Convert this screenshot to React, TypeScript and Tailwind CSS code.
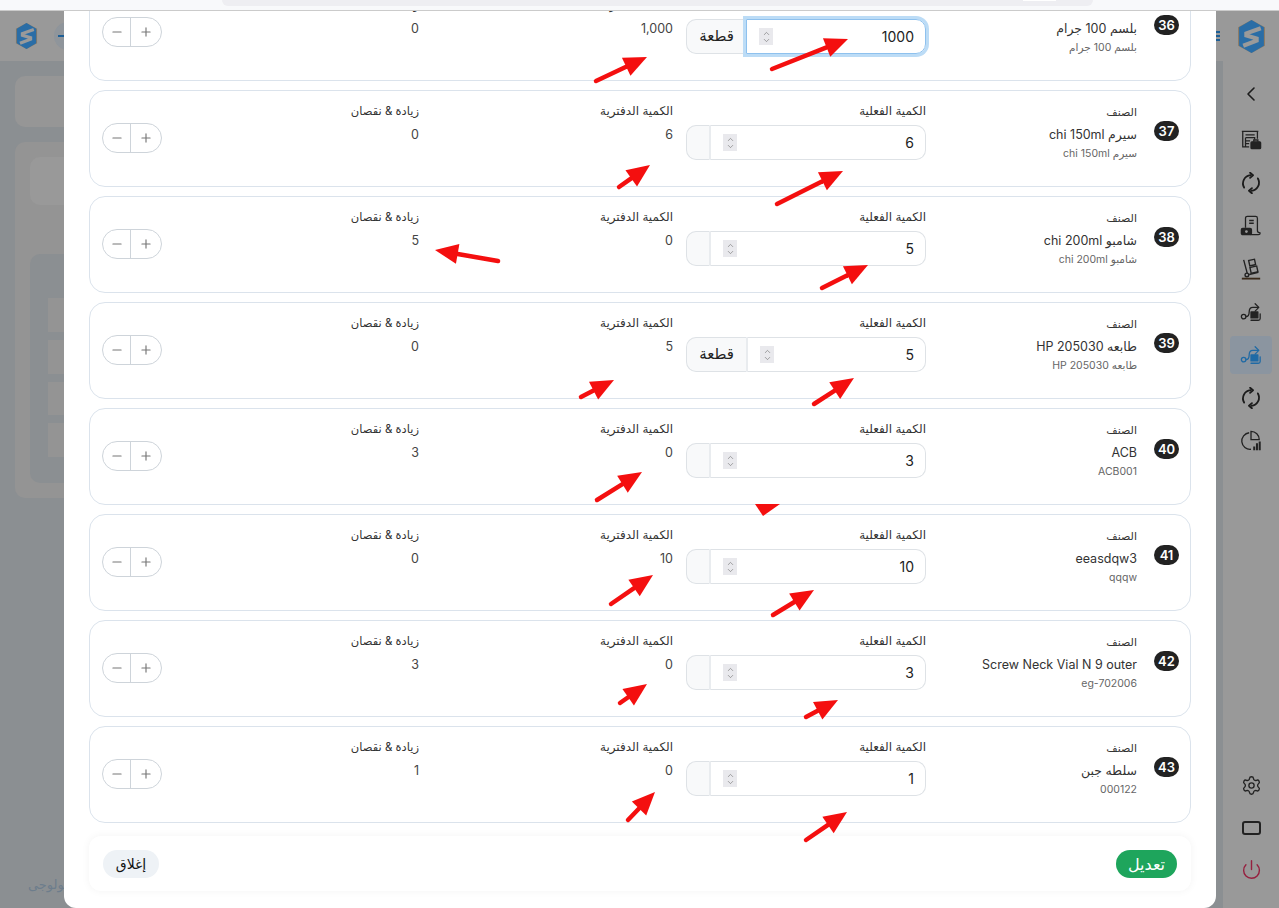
import React from "react";
import { ChevronLeft, Minus, Plus, Settings, Power, ChevronUp, ChevronDown } from "lucide-react";

type Item = {
  no: number;
  name: string;
  code: string;
  actual: string;
  book: string;
  diff: string;
  unit?: string;
  focused?: boolean;
};

const items: Item[] = [
  { no: 36, name: "بلسم 100 جرام", code: "بلسم 100 جرام", actual: "1000", book: "1,000", diff: "0", unit: "قطعة", focused: true },
  { no: 37, name: "سيرم chi 150ml", code: "سيرم chi 150ml", actual: "6", book: "6", diff: "0" },
  { no: 38, name: "شامبو chi 200ml", code: "شامبو chi 200ml", actual: "5", book: "0", diff: "5" },
  { no: 39, name: "طابعه HP 205030", code: "طابعه HP 205030", actual: "5", book: "5", diff: "0", unit: "قطعة" },
  { no: 40, name: "ACB", code: "ACB001", actual: "3", book: "0", diff: "3" },
  { no: 41, name: "eeasdqw3", code: "qqqw", actual: "10", book: "10", diff: "0" },
  { no: 42, name: "Screw Neck Vial N 9 outer", code: "eg-702006", actual: "3", book: "0", diff: "3" },
  { no: 43, name: "سلطه جبن", code: "000122", actual: "1", book: "0", diff: "1" },
];

// tail x, tail y, tip x, tip y
const arrows = [
  [596, 81, 647, 57],
  [772, 69, 848, 39],
  [619, 187, 650, 165],
  [777, 204, 843, 171],
  [498, 261, 435, 250],
  [822, 288, 868, 265],
  [581, 397, 614, 380],
  [814, 404, 854, 378],
  [597, 500, 642, 472],
  [611, 604, 653, 575],
  [773, 615, 814, 590],
  [620, 703, 647, 684],
  [806, 717, 838, 700],
  [628, 820, 655, 792],
  [806, 840, 847, 812],
];

const Arrow = ({ a }: { a: number[] }) => {
  const [x1, y1, x2, y2] = a;
  const len = Math.hypot(x2 - x1, y2 - y1);
  const ux = (x2 - x1) / len;
  const uy = (y2 - y1) / len;
  const bx = x2 - ux * 23;
  const by = y2 - uy * 23;
  const pts = `${x2},${y2} ${bx - uy * 10},${by + ux * 10} ${bx + uy * 10},${by - ux * 10}`;
  return (
    <g>
      <line x1={x1} y1={y1} x2={bx} y2={by} stroke="#f40f0f" strokeWidth="4.500" strokeLinecap="round" />
      <polygon points={pts} fill="#f40f0f" />
    </g>
  );
};

const Logo = ({ className }: { className: string }) => (
  <svg viewBox="0 0 28 32" className={className}>
    <polygon points="14,0 27,7 27,25 14,32 1,25 1,7" fill="#8d7a62" />
    <polygon points="14,0 26,7 26,25 14,32 2,25 2,7" fill="#2a6da6" />
    <path d="M23 8 L9 13 L9 15 L19 18 L19 20 L6 25" fill="none" stroke="#9a9a9a" strokeWidth="4" />
  </svg>
);

const Sync = () => (
  <svg viewBox="0 0 24 24" className="w-[22px] h-[22px]" fill="none" stroke="#1c1c1c" strokeWidth="2" strokeLinecap="round" strokeLinejoin="round">
    <path d="M4.500 17a9 9 0 0 1 7-13.500" />
    <path d="M11 0.800 14.200 3.600 11 6.400" />
    <path d="M19.500 7a9 9 0 0 1-7 13.500" />
    <path d="M13 17.600 9.800 20.400 13 23.200" />
  </svg>
);

const Store = () => (
  <svg viewBox="0 0 24 24" className="w-[22px] h-[22px]" fill="none" stroke="#222" strokeWidth="1.4">
    <path d="M2 2.500h18M3 2.500v17h7M19 2.500v8M6 6.500h10M6 9.500h10v2M6 9.500v10M6 13h5M6 16h4" />
    <rect x="12" y="14" width="10.500" height="7.500" rx="1" fill="#222" />
    <path d="M15 14v-2h4.500v2" />
  </svg>
);

const Invoice = () => (
  <svg viewBox="0 0 24 24" className="w-[22px] h-[22px]" fill="none" stroke="#222" strokeWidth="1.4" strokeLinejoin="round">
    <path d="M6 14V3.500C6 2 7 1.500 8 1.500h9c1 0 2 .8 2 2V17c0 1.500 1 2.500 3 2.500 0 1.500-1 2-2 2H11" />
    <path d="M10 6h5M10 9h5" />
    <rect x="1.500" y="14.500" width="11" height="7" rx="1.500" fill="#222" />
    <circle cx="7" cy="18" r="1.500" fill="#999" stroke="none" />
  </svg>
);

const Trolley = () => (
  <svg viewBox="0 0 24 24" className="w-[22px] h-[22px]" fill="none" stroke="#222" strokeWidth="1.5">
    <path d="M4 2l4 15" />
    <rect x="10" y="2" width="6.500" height="6" transform="rotate(-12 13 5)" />
    <rect x="11.500" y="9.500" width="7.500" height="6.500" transform="rotate(-12 15 13)" />
    <path d="M10 18l10-2.500" />
    <circle cx="7.500" cy="18.500" r="2" />
    <path d="M2 22.500h20" strokeWidth="2" stroke="#3a2a1a" />
  </svg>
);

const RouteBox = ({ color }: { color: string }) => (
  <svg viewBox="0 0 24 24" className="w-[22px] h-[22px]" fill="none" stroke={color} strokeWidth="1.4" strokeLinecap="round" strokeLinejoin="round">
    <circle cx="4" cy="17" r="2.500" />
    <path d="M6.500 17c3 0 3.500-2 3.500-5 0-3 1-5 4-5h6" />
    <path d="M16.500 3l4 4-4 4" />
    <rect x="12" y="12" width="7.500" height="6.500" fill={color} />
    <path d="M22 14v5c0 1-.5 2-2 2h-8" />
  </svg>
);

const PieBars = () => (
  <svg viewBox="0 0 24 24" className="w-[22px] h-[22px]" fill="none" stroke="#222" strokeWidth="1.4">
    <path d="M10 3a9 9 0 1 0 2 18" />
    <path d="M12 1.500a9 9 0 0 1 9 9h-9z" />
    <path d="M15.500 22v-4M18.500 22v-7.500M21.500 22v-9.500" strokeWidth="2.200" />
  </svg>
);

const SideIcon = ({ children, active }: { children: React.ReactNode; active?: boolean }) => (
  <div className={`w-[42px] h-[38px] rounded flex items-center justify-center shrink-0 ${active ? "bg-[#8b95a0]" : ""}`}>
    {children}
  </div>
);

const Field = ({ label, value, labelClass }: { label: string; value: string; labelClass: string }) => (
  <div className="flex flex-col">
    <span className={`leading-4 text-[#333] ${labelClass}`}>{label}</span>
    <span className="text-[12.500px] leading-5 mt-[6px] text-[#444]">{value}</span>
  </div>
);

const QtyInput = ({ item }: { item: Item }) => (
  <div dir="ltr" className="w-[240px] h-[35px] flex">
    <div
      dir="rtl"
      className={`shrink-0 bg-[#f8f9fa] rounded-l-[10px] border border-r-0 border-[#dee2e6] flex items-center justify-center text-[15px] text-[#222] ${
        item.unit ? "w-[60px]" : "w-[23px]"
      }`}
    >
      {item.unit}
    </div>
    <div
      className={`flex-1 min-w-0 flex items-center pl-[12px] pr-[11px] rounded-r-[10px] border ${
        item.focused ? "border-[#8ec1ee] ring-[3px] ring-[#bcdcf6]" : "border-[#dee2e6] border-l-2 border-l-[#e9ecef]"
      }`}
    >
      <div className="shrink-0 w-[14px] h-[17px] bg-[#e9e9ed] flex flex-col items-center justify-center text-[#666]">
        <ChevronUp size={9} strokeWidth={1.500} className="-mb-[1px]" />
        <ChevronDown size={9} strokeWidth={1.500} className="-mt-[1px]" />
      </div>
      <input
        readOnly
        value={item.actual}
        className="flex-1 min-w-0 text-right text-[14px] text-[#222] outline-none bg-transparent"
      />
    </div>
  </div>
);

const Card = ({ item }: { item: Item }) => (
  <div dir="rtl" className="h-[97px] shrink-0 flex border border-[#dbe3ec] rounded-[16px] pr-[11px] pl-3 pt-3 pb-[13px]">
    <div className="w-[25px] shrink-0 ml-[17px]">
      <div className="mt-[18px] h-5 rounded-full bg-[#222] text-white font-semibold text-[13px] leading-5 text-center" dir="ltr">
        {item.no}
      </div>
    </div>
    <div className="w-[211px] shrink-0 flex flex-col pt-[1px]">
      <span className="text-[11px] leading-4 text-[#333]">الصنف</span>
      <span className="text-[12.500px] leading-5 mt-[5px] text-[#333]">{item.name}</span>
      <span className="text-[10.500px] leading-4 mt-[1px] text-[#666]">{item.code}</span>
    </div>
    <div className="w-[253px] shrink-0">
      <div className="text-[12px] leading-4 text-[#333] mb-[6px]">الكمية الفعلية</div>
      <QtyInput item={item} />
    </div>
    <div className="w-[254px] shrink-0">
      <Field label="الكمية الدفترية" value={item.book} labelClass="text-[12px]" />
    </div>
    <div className="flex-1">
      <Field label="زيادة & نقصان" value={item.diff} labelClass="text-[11.500px]" />
    </div>
    <div dir="ltr" className="self-center w-[60px] h-[30px] shrink-0 flex rounded-full border border-[#ced4da] text-[#777]">
      <div className="w-[28px] flex items-center justify-center border-r border-[#ced4da]">
        <Minus size={14} />
      </div>
      <div className="flex-1 flex items-center justify-center">
        <Plus size={14} />
      </div>
    </div>
  </div>
);

const App = () => {
  return (
    <div className="relative h-screen w-full overflow-hidden flex flex-col bg-[#8b8f92] font-['Inter','Noto_Sans','DejaVu_Sans',sans-serif]">
      {/* browser strip on top */}
      <div className="h-[11px] shrink-0 bg-[#f8f9fb] border-b border-[#cbcbcb]">
        <div className="ml-[222px] w-[871px] h-[6px] bg-[#eeeef2] rounded-b-md flex justify-end pr-[37px]">
          <div className="w-[33px] h-[1px] bg-white" />
        </div>
      </div>

      <div className="flex-1 min-h-0 flex">
        {/* page behind the modal, left */}
        <div className="w-[64px] shrink-0 overflow-hidden flex flex-col">
          <div className="h-[50px] shrink-0 bg-[#999999] flex items-center pl-[14px] gap-[15px] pb-[1px]">
            <Logo className="w-[25px] h-[26px] shrink-0" />
            <div className="w-[28px] h-[28px] shrink-0 rounded-full bg-[#8f959b] flex items-center pl-[4px]">
              <div className="w-[12px] h-[2px] bg-[#1d5f96]" />
            </div>
          </div>
          <div className="w-[200px] pl-[15px] pt-[15px]">
            <div className="h-[51px] bg-[#969696] rounded-[10px]" />
            <div className="h-[356px] mt-[15px] bg-[#949494] rounded-[10px] pl-[15px] pt-[15px]">
              <div className="h-[48px] bg-[#999999] rounded-[10px]" />
              <div className="h-[229px] mt-[49px] bg-[#8b8f92] rounded-[10px] pl-[18px] pt-[44px] flex flex-col">
                <div className="h-[34px] bg-[#949494]" />
                <div className="h-[34px] mt-[8px] bg-[#949494]" />
                <div className="h-[33px] mt-[8px] bg-[#949494]" />
                <div className="h-[34px] mt-[8px] bg-[#949494]" />
              </div>
            </div>
          </div>
          <div dir="ltr" className="mt-auto pb-[16px] pl-[28px] w-[200px] text-[13px] leading-4 text-[#6d7d8c] whitespace-nowrap">
            بواسطة تكنولوجى
          </div>
        </div>

        {/* modal */}
        <div className="w-[1152px] shrink-0 bg-white rounded-b-[12px] px-[25px] flex flex-col overflow-hidden">
          <div className="-mt-[27px] flex flex-col gap-[9px]">
            {items.map((item) => (
              <Card key={item.no} item={item} />
            ))}
          </div>
          <div
            dir="rtl"
            className="mt-[13px] h-[55px] shrink-0 rounded-[12px] bg-white shadow-[0_0_8px_rgba(0,0,0,0.05)] flex items-center justify-between px-[14px]"
          >
            <button className="w-[61px] h-[28px] rounded-full bg-[#1ea55c] text-white text-[16px]">تعديل</button>
            <button className="w-[56px] h-[28px] rounded-full bg-[#eef2f6] text-[#111] text-[14px]">إغلاق</button>
          </div>
        </div>

        {/* page behind the modal, right */}
        <div className="flex-1 min-w-0 flex flex-col bg-[#999999]">
          <div className="h-[50px] shrink-0 flex items-center">
            <div className="w-[21px] shrink-0 flex flex-col gap-[2px] pr-[17px]">
              <div className="h-[2px] bg-[#1d5f96]" />
              <div className="h-[2px] bg-[#1d5f96]" />
              <div className="h-[2px] bg-[#1d5f96]" />
            </div>
            <Logo className="w-[29px] h-[33px] shrink-0" />
          </div>
          <div className="flex-1 min-h-0 flex">
            <div className="w-[7px] shrink-0 bg-[#8b8f92]" />
            <div className="flex-1 flex flex-col items-center pt-[14px] pb-[20px]">
              <SideIcon>
                <ChevronLeft size={24} strokeWidth={1.6} color="#1c1c1c" />
              </SideIcon>
              <div className="mt-[8px] flex flex-col gap-[5px]">
                <SideIcon><Store /></SideIcon>
                <SideIcon><Sync /></SideIcon>
                <SideIcon><Invoice /></SideIcon>
                <SideIcon><Trolley /></SideIcon>
                <SideIcon><RouteBox color="#222" /></SideIcon>
                <SideIcon active><RouteBox color="#1f6aa5" /></SideIcon>
                <SideIcon><Sync /></SideIcon>
                <SideIcon><PieBars /></SideIcon>
              </div>
              <div className="mt-auto flex flex-col gap-[5px]">
                <SideIcon><Settings size={21} strokeWidth={1.5} color="#222" /></SideIcon>
                <SideIcon>
                  <div className="w-[19px] h-[14px] rounded-[3px] border-2 border-[#222]" />
                </SideIcon>
                <div className="-mt-[2px]">
                  <SideIcon><Power size={21} strokeWidth={1.6} color="#96203f" /></SideIcon>
                </div>
              </div>
            </div>
          </div>
        </div>
      </div>

      {/* red arrows drawn over the screenshot */}
      <svg className="absolute inset-0 w-full h-full pointer-events-none" viewBox="0 0 1279 908">
        {arrows.map((a, i) => (
          <Arrow key={i} a={a} />
        ))}
        <polygon points="755,504 780,504 763,516" fill="#f40f0f" />
      </svg>
    </div>
  );
};

export default App;
